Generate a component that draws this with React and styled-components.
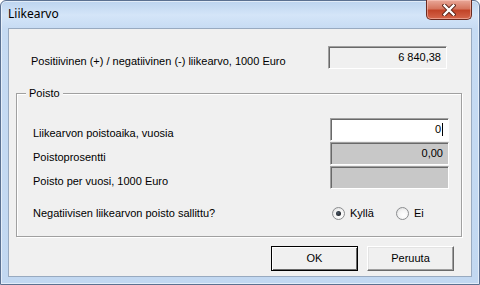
import React from 'react';
import styled, { createGlobalStyle } from 'styled-components';

const Global = createGlobalStyle`
  html, body {
    margin: 0;
    padding: 0;
    background: #ffffff;
  }
  body {
    font-family: "Liberation Sans", Arial, sans-serif;
  }
`;

const Frame = styled.div`
  width: 480px;
  height: 285px;
  box-sizing: border-box;
  display: flex;
  flex-direction: column;
  padding: 0 7px 7px 7px;
  border: 1px solid #5b7191;
  border-radius: 6px 6px 0 0;
  background: linear-gradient(180deg, #bcd4ef 0px, #d4e5f8 14px, #c6dbf3 28px, #c2d8f1 100%);
  box-shadow: inset 0 0 0 1px rgba(255, 255, 255, 0.55);
`;

const TitleBar = styled.div`
  height: 27px;
  display: flex;
  align-items: flex-start;
`;

const Title = styled.div`
  font-family: "Noto Sans", "Open Sans", sans-serif;
  font-size: 12px;
  color: #000;
  padding: 5px 0 0 0;
  line-height: 16px;
`;

const CloseButton = styled.div`
  margin-left: auto;
  margin-top: -1px;
  width: 46px;
  height: 20px;
  box-sizing: border-box;
  border: 1px solid #6b2a1f;
  border-top: none;
  border-radius: 0 0 5px 5px;
  background: linear-gradient(180deg, #e9a899 0%, #d6765f 45%, #c24428 55%, #d5664b 100%);
  box-shadow: inset 0 0 0 1px rgba(255, 210, 200, 0.5);
  display: flex;
  align-items: center;
  justify-content: center;
`;

const Client = styled.div`
  flex: 1;
  background: #f0f0f0;
  border: 1px solid #98aac0;
  display: flex;
  flex-direction: column;
  font-size: 11px;
  color: #000;
`;

const TopRow = styled.div`
  display: flex;
  align-items: center;
  margin-top: 17px;
  padding: 0 24px 0 22px;
`;

const Label = styled.div`
  flex: 1;
  line-height: 13px;
  padding-top: ${p => (p.$plain ? 0 : 8)}px;
`;

const Field = styled.div`
  width: ${p => p.$w || 119}px;
  height: 23px;
  box-sizing: border-box;
  border-style: solid;
  border-width: 1px;
  border-color: #a0a0a0 #ffffff #ffffff #a0a0a0;
  box-shadow: inset 1px 1px 0 #696969;
  background: ${p => (p.$tone === 'white' ? '#ffffff' : p.$tone === 'gray' ? '#c8c8c8' : '#f0f0f0')};
  display: flex;
  align-items: center;
  justify-content: flex-end;
  padding-right: 5px;
  line-height: 13px;
`;

const Caret = styled.span`
  display: inline-block;
  width: 1px;
  height: 13px;
  background: #000;
  margin-left: 1px;
`;

const Group = styled.div`
  position: relative;
  margin: 24px 9px 0 7px;
  border: 1px solid #a0a0a0;
  box-shadow: inset 1px 1px 0 #ffffff, 1px 1px 0 #ffffff;
  padding: 24px 12px 15px 16px;
  display: flex;
  flex-direction: column;
  gap: 1px;
`;

const Legend = styled.div`
  position: absolute;
  top: -7px;
  left: 9px;
  padding: 0 3px;
  background: #f0f0f0;
  line-height: 13px;
`;

const Row = styled.div`
  display: flex;
  align-items: center;
`;

const RadioRow = styled.div`
  display: flex;
  align-items: center;
  margin-top: 15px;
  height: 16px;
`;

const Radios = styled.div`
  width: 117px;
  display: flex;
  align-items: center;
`;

const RadioItem = styled.label`
  display: flex;
  align-items: center;
  gap: 5px;
  width: ${p => p.$w}px;
`;

const RadioCircle = styled.span`
  width: 13px;
  height: 13px;
  box-sizing: border-box;
  border-radius: 50%;
  border: 1px solid #8b8d8f;
  background: radial-gradient(circle at 60% 65%, #ffffff 0%, #f4f4f4 50%, #d6d6d6 100%);
  display: flex;
  align-items: center;
  justify-content: center;
  &::after {
    content: '';
    width: 5px;
    height: 5px;
    border-radius: 50%;
    background: ${p => (p.$on ? 'radial-gradient(circle at 40% 40%, #4c5a6a, #0c0c0c)' : 'transparent')};
  }
`;

const ButtonBar = styled.div`
  display: flex;
  justify-content: flex-end;
  gap: 9px;
  margin-top: 9px;
  padding-right: 17px;
`;

const Button = styled.div`
  width: 87px;
  height: 25px;
  box-sizing: border-box;
  display: flex;
  align-items: center;
  justify-content: center;
  background: #f0f0f0;
  border: 1px solid;
  border-color: ${p => (p.$default ? '#000' : '#ffffff #696969 #696969 #ffffff')};
  box-shadow: ${p =>
    p.$default
      ? 'inset 1px 1px 0 #ffffff, inset -1px -1px 0 #696969'
      : 'inset -1px -1px 0 #a0a0a0, inset 1px 1px 0 #e3e3e3'};
  line-height: 13px;
`;

const rows = [
  { label: 'Liikearvon poistoaika, vuosia', value: '0', tone: 'white', caret: true },
  { label: 'Poistoprosentti', value: '0,00', tone: 'gray' },
  { label: 'Poisto per vuosi, 1000 Euro', value: '', tone: 'gray' },
];

export default function App() {
  return (
    <>
      <Global />
      <Frame>
        <TitleBar>
          <Title>Liikearvo</Title>
          <CloseButton>
            <svg width="14" height="12" viewBox="0 0 14 12">
              <path d="M2.5 1.5 L11.5 10.5 M11.5 1.5 L2.5 10.5" stroke="#5a2418" strokeWidth="4.2" strokeLinecap="square" />
              <path d="M2.5 1.5 L11.5 10.5 M11.5 1.5 L2.5 10.5" stroke="#ffffff" strokeWidth="2.4" strokeLinecap="square" />
            </svg>
          </CloseButton>
        </TitleBar>
        <Client>
          <TopRow>
            <Label>Positiivinen (+) / negatiivinen (-) liikearvo, 1000 Euro</Label>
            <Field $tone="face">6 840,38</Field>
          </TopRow>
          <Group>
            <Legend>Poisto</Legend>
            {rows.map(r => (
              <Row key={r.label}>
                <Label>{r.label}</Label>
                <Field $tone={r.tone}>
                  {r.value}
                  {r.caret && <Caret />}
                </Field>
              </Row>
            ))}
            <RadioRow>
              <Label $plain>Negatiivisen liikearvon poisto sallittu?</Label>
              <Radios>
                <RadioItem $w={64}>
                  <RadioCircle $on />
                  Kyllä
                </RadioItem>
                <RadioItem $w={40}>
                  <RadioCircle />
                  Ei
                </RadioItem>
              </Radios>
            </RadioRow>
          </Group>
          <ButtonBar>
            <Button $default>OK</Button>
            <Button>Peruuta</Button>
          </ButtonBar>
        </Client>
      </Frame>
    </>
  );
}
